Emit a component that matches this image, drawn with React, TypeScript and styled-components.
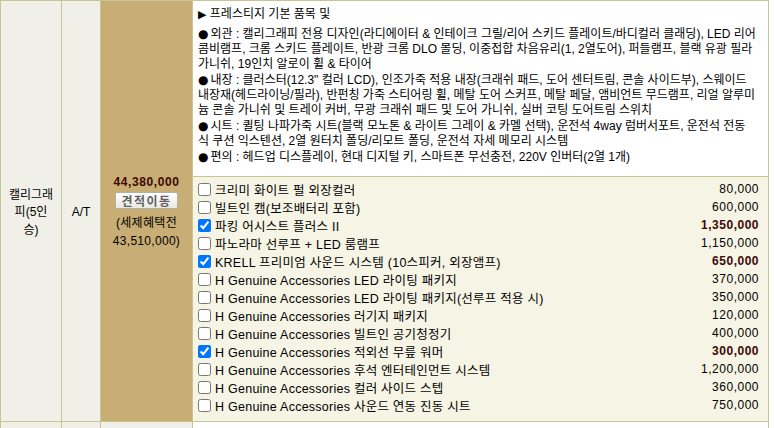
import { createGlobalStyle, styled } from 'styled-components';

type Option = {
  name: string;
  price: string;
  checked?: boolean;
};

const options: Option[] = [
  { name: '크리미 화이트 펄 외장컬러', price: '80,000' },
  { name: '빌트인 캠(보조배터리 포함)', price: '600,000' },
  { name: '파킹 어시스트 플러스 II', price: '1,350,000', checked: true },
  { name: '파노라마 선루프 + LED 룸램프', price: '1,150,000' },
  { name: 'KRELL 프리미엄 사운드 시스템 (10스피커, 외장앰프)', price: '650,000', checked: true },
  { name: 'H Genuine Accessories LED 라이팅 패키지', price: '370,000' },
  { name: 'H Genuine Accessories LED 라이팅 패키지(선루프 적용 시)', price: '350,000' },
  { name: 'H Genuine Accessories 러기지 패키지', price: '120,000' },
  { name: 'H Genuine Accessories 빌트인 공기청정기', price: '400,000' },
  { name: 'H Genuine Accessories 적외선 무릎 워머', price: '300,000', checked: true },
  { name: 'H Genuine Accessories 후석 엔터테인먼트 시스템', price: '1,200,000' },
  { name: 'H Genuine Accessories 컬러 사이드 스텝', price: '360,000' },
  { name: 'H Genuine Accessories 사운드 연동 진동 시트', price: '750,000' },
];

// first line of each section gets a bullet
const sections: string[][] = [
  [
    '외관 : 캘리그래피 전용 디자인(라디에이터 & 인테이크 그릴/리어 스키드 플레이트/바디컬러 클래딩), LED 리어',
    '콤비램프, 크롬 스키드 플레이트, 반광 크롬 DLO 몰딩, 이중접합 차음유리(1, 2열도어), 퍼들램프, 블랙 유광 필라',
    '가니쉬, 19인치 알로이 휠 & 타이어',
  ],
  [
    '내장 : 클러스터(12.3" 컬러 LCD), 인조가죽 적용 내장(크래쉬 패드, 도어 센터트림, 콘솔 사이드부), 스웨이드',
    '내장재(헤드라이닝/필라), 반펀칭 가죽 스티어링 휠, 메탈 도어 스커프, 메탈 페달, 앰비언트 무드램프, 리얼 알루미',
    '늄 콘솔 가니쉬 및 트레이 커버, 무광 크래쉬 패드 및 도어 가니쉬, 실버 코팅 도어트림 스위치',
  ],
  [
    '시트 : 퀼팅 나파가죽 시트(블랙 모노톤 & 라이트 그레이 & 카멜 선택), 운전석 4way 럼버서포트, 운전석 전동',
    '식 쿠션 익스텐션, 2열 원터치 폴딩/리모트 폴딩, 운전석 자세 메모리 시스템',
  ],
  ['편의 : 헤드업 디스플레이, 현대 디지털 키, 스마트폰 무선충전, 220V 인버터(2열 1개)'],
];

const GlobalStyle = createGlobalStyle`
  body {
    margin: 0;
    background: #fff;
    font-family: "Liberation Sans", "Noto Sans CJK KR", sans-serif;
    color: #000;
  }
`;

export default function App() {
  return (
    <>
      <GlobalStyle />
      <Table>
        <SideCell>
          <ModelName>
            캘리그래
            <br />
            피(5인
            <br />
            승)
          </ModelName>
        </SideCell>
        <SideCell>A/T</SideCell>
        <PriceCell>
          <TotalPrice>44,380,000</TotalPrice>
          <MoveButton type="button">견적이동</MoveButton>
          <BeforeTax>
            (세제혜택전
            <br />
            43,510,000)
          </BeforeTax>
        </PriceCell>
        <DetailCell>
          <Description>
            <Heading>
              <Arrow>▶</Arrow> 프레스티지 기본 품목 및
            </Heading>
            {sections.map((lines, i) => (
              <Section key={i}>
                {lines.map((line, j) => (
                  <Line key={j}>
                    {j === 0 && <Bullet>●</Bullet>}
                    {line}
                  </Line>
                ))}
              </Section>
            ))}
          </Description>
          <OptionList>
            {options.map((opt) => (
              <OptionRow key={opt.name}>
                <Check type="checkbox" checked={!!opt.checked} readOnly />
                <OptionName>{opt.name}</OptionName>
                <OptionPrice $checked={!!opt.checked}>{opt.price}</OptionPrice>
              </OptionRow>
            ))}
          </OptionList>
        </DetailCell>

        <NextCell />
        <NextCell />
        <NextCell />
        <NextDetail />
      </Table>
    </>
  );
}

const Table = styled.div`
  display: grid;
  grid-template-columns: 60px 38px 91px 575px;
  grid-template-rows: 420px 20px;
  gap: 1px;
  padding: 1px;
  width: 767px;
  background: #c9c592;
`;

const SideCell = styled.div`
  background: #f1f0e8;
  display: flex;
  align-items: center;
  justify-content: center;
  text-align: center;
  font-size: 12px;
  line-height: 17.5px;
  padding-top: 4px;
`;

const ModelName = styled.div`
  font-size: 12px;
`;

const PriceCell = styled.div`
  background: #c8ae74;
  display: flex;
  flex-direction: column;
  align-items: center;
  justify-content: center;
  padding-top: 1px;
`;

const TotalPrice = styled.div`
  font-size: 12px;
  font-weight: bold;
  color: #3d0808;
  letter-spacing: 0.6px;
  line-height: 16px;
`;

const MoveButton = styled.button`
  margin-top: 2px;
  width: 63px;
  height: 17px;
  padding: 0;
  border: 1px solid #b3b0a4;
  border-radius: 2px;
  background: linear-gradient(#ffffff, #e8e8e4);
  font-family: "Noto Sans CJK KR", sans-serif;
  font-size: 12px;
  font-weight: bold;
  letter-spacing: 1.5px;
  color: #626262;
  line-height: 15px;
`;

const BeforeTax = styled.div`
  margin-top: 5px;
  font-size: 12px;
  line-height: 18px;
  text-align: center;
  letter-spacing: 0.3px;
`;

const DetailCell = styled.div`
  display: grid;
  grid-template-rows: 175px 1fr;
  gap: 1px;
  background: #c9c592;
`;

const Description = styled.div`
  background: #fff;
  padding: 6px 0 0 5px;
  font-size: 12px;
  line-height: 15px;
  white-space: nowrap;
  overflow: hidden;
`;

const Heading = styled.div`
  margin-bottom: 5px;
`;

const Arrow = styled.span`
  font-family: "DejaVu Sans", sans-serif;
  font-size: 11px;
`;

const Bullet = styled.span`
  font-family: "DejaVu Sans", sans-serif;
  font-size: 12px;
  margin-right: 2px;
`;

const Section = styled.div`
  & + & {
    margin-top: 1px;
  }
`;

const Line = styled.div``;

const OptionList = styled.div`
  background: #f6f4e4;
  padding: 3px 9px 0 5px;
`;

const OptionRow = styled.div`
  display: flex;
  align-items: center;
  height: 18px;
  font-size: 12.5px;
  letter-spacing: 0.25px;
`;

const Check = styled.input`
  width: 13px;
  height: 13px;
  margin: 0 4px 0 0;
  flex: none;
`;

const OptionName = styled.span`
  flex: 1;
  white-space: nowrap;
`;

const OptionPrice = styled.span<{ $checked: boolean }>`
  font-size: 12px;
  letter-spacing: 0.5px;
  font-weight: ${(p) => (p.$checked ? 'bold' : 'normal')};
  color: ${(p) => (p.$checked ? '#3d0808' : '#000')};
`;

const NextCell = styled.div`
  background: #f1f0e8;
`;

const NextDetail = styled.div`
  background: #fff;
`;
